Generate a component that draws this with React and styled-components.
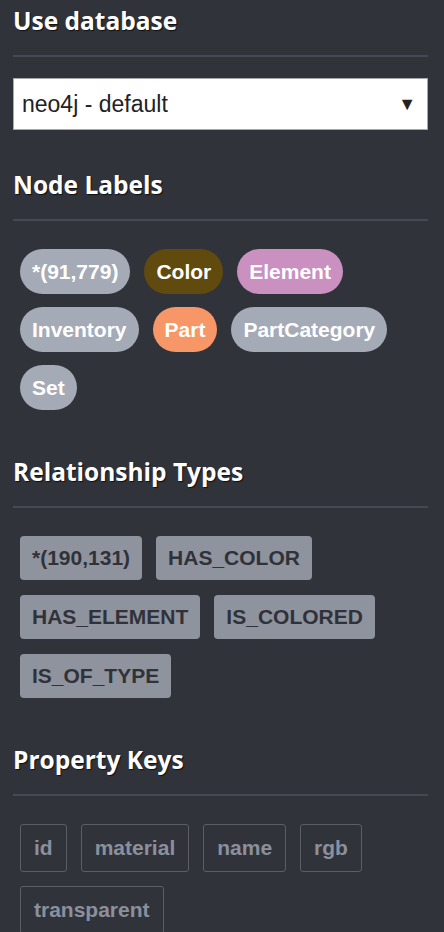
import React from "react";
import styled, { createGlobalStyle } from "styled-components";

const GlobalStyle = createGlobalStyle`
  html, body {
    margin: 0;
    padding: 0;
    background: #31333b;
  }
  * {
    box-sizing: border-box;
  }
`;

const nodeLabels = [
  { name: "*(91,779)", color: "#a5abb6" },
  { name: "Color", color: "#604a0e" },
  { name: "Element", color: "#c990c0" },
  { name: "Inventory", color: "#a5abb6" },
  { name: "Part", color: "#f79767" },
  { name: "PartCategory", color: "#a5abb6" },
  { name: "Set", color: "#a5abb6" },
];

const relTypes = [
  "*(190,131)",
  "HAS_COLOR",
  "HAS_ELEMENT",
  "IS_COLORED",
  "IS_OF_TYPE",
];

const propertyKeys = ["id", "material", "name", "rgb", "transparent"];

const App = () => {
  return (
    <Drawer>
      <GlobalStyle />
      <Section>
        <Heading>Use database</Heading>
        <Divider />
        <DatabaseSelect>
          <span>neo4j - default</span>
          <Arrow>▼</Arrow>
        </DatabaseSelect>
      </Section>

      <Section>
        <Heading>Node Labels</Heading>
        <Divider />
        <TagList $rowGap={13}>
          {nodeLabels.map((l) => (
            <LabelPill key={l.name} $bg={l.color}>
              {l.name}
            </LabelPill>
          ))}
        </TagList>
      </Section>

      <Section>
        <Heading>Relationship Types</Heading>
        <Divider />
        <TagList $rowGap={15}>
          {relTypes.map((r) => (
            <RelTag key={r}>{r}</RelTag>
          ))}
        </TagList>
      </Section>

      <Section>
        <Heading>Property Keys</Heading>
        <Divider />
        <TagList $rowGap={14}>
          {propertyKeys.map((k) => (
            <PropKey key={k}>{k}</PropKey>
          ))}
        </TagList>
      </Section>
    </Drawer>
  );
};

const Drawer = styled.div`
  width: 444px;
  min-height: 932px;
  background: #31333b;
  padding: 5px 16px 0 13px;
  display: flex;
  flex-direction: column;
  gap: 39px;
`;

const Section = styled.section`
  display: flex;
  flex-direction: column;
`;

const Heading = styled.h3`
  margin: 0;
  font-family: "Open Sans", sans-serif;
  font-weight: 700;
  font-size: 24.5px;
  line-height: 32px;
  color: #ffffff;
  text-shadow: 1px 1px 1px rgba(0, 0, 0, 0.7);
`;

const Divider = styled.div`
  height: 2px;
  background: #464953;
  margin: 18px 0 21px;
`;

const DatabaseSelect = styled.div`
  height: 52px;
  background: #ffffff;
  border: 1px solid #a9a9a9;
  display: flex;
  align-items: center;
  justify-content: space-between;
  padding: 0 11px 0 8px;
  font-family: "Liberation Sans", Arial, sans-serif;
  font-size: 23px;
  color: #222222;
`;

const Arrow = styled.span`
  font-size: 18px;
  color: #222222;
`;

const TagList = styled.div`
  display: flex;
  flex-wrap: wrap;
  gap: ${({ $rowGap }) => $rowGap}px 14px;
  padding: 7px;
  font-family: "Liberation Sans", Arial, sans-serif;
  font-weight: 700;
  font-size: 21px;
  line-height: 24px;
`;

const LabelPill = styled.span`
  background: ${({ $bg }) => $bg};
  color: #ffffff;
  height: 45px;
  padding: 10px 12px;
  border-radius: 23px;
  line-height: 25px;
`;

const RelTag = styled.span`
  background: #8f939d;
  color: #30323a;
  height: 44px;
  padding: 10px 12px;
  border-radius: 4px;
`;

const PropKey = styled.span`
  color: #8a909c;
  border: 1px solid #5b5e67;
  height: 48px;
  padding: 11px 13px;
  border-radius: 3px;
`;

export default App;
